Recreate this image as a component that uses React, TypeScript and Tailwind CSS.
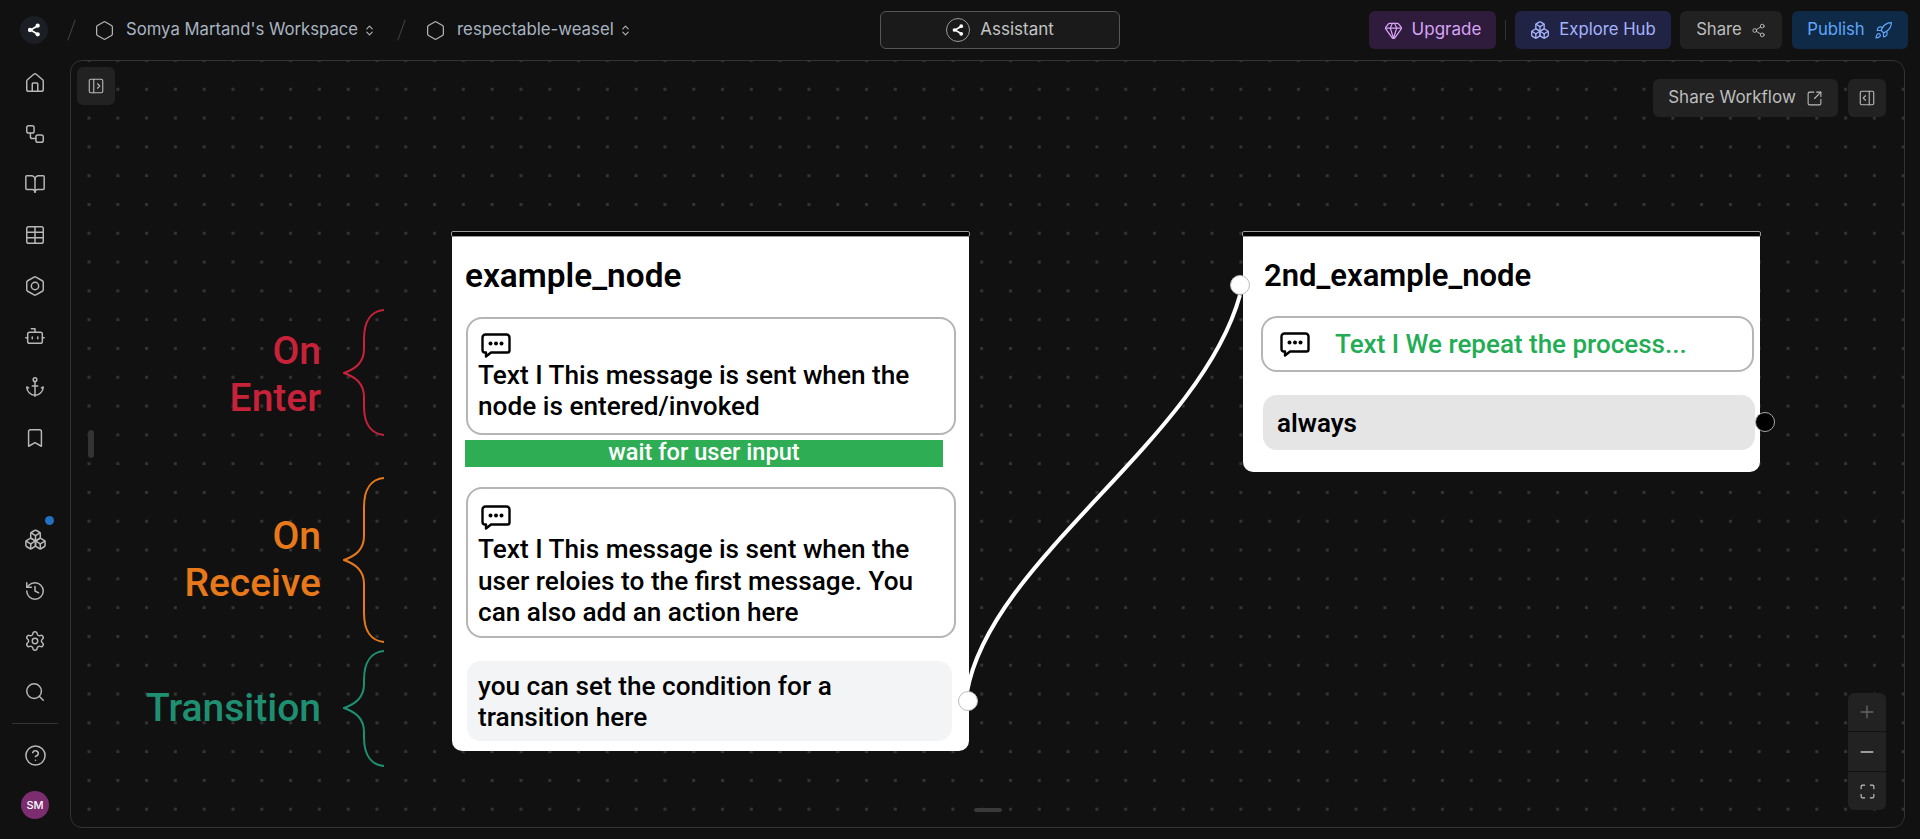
import React from 'react';
import {
  Anchor,
  Bookmark,
  BookOpen,
  Bot,
  Boxes,
  ChevronsUpDown,
  CircleHelp,
  Gem,
  Hexagon,
  History,
  House,
  Maximize,
  Minus,
  PanelLeftOpen,
  PanelRightOpen,
  Plus,
  Rocket,
  Search,
  Settings,
  Share2,
  SquareArrowOutUpRight,
  Table,
  Workflow,
} from 'lucide-react';

function ShareLogo({ size = 16 }: { size?: number }) {
  return (
    <svg width={size} height={size} viewBox="0 0 24 24" fill="currentColor" stroke="currentColor" strokeWidth="2.5">
      <line x1="7" y1="12" x2="17" y2="6" />
      <line x1="7" y1="12" x2="17" y2="18" />
      <circle cx="6" cy="12" r="3.2" stroke="none" />
      <circle cx="17.5" cy="5.5" r="3.2" stroke="none" />
      <circle cx="17.5" cy="18.5" r="3.2" stroke="none" />
    </svg>
  );
}

function HexRing({ size = 22 }: { size?: number }) {
  return (
    <svg width={size} height={size} viewBox="0 0 24 24" fill="none" stroke="currentColor" strokeWidth="1.6" strokeLinejoin="round">
      <path d="M21 16V8a2 2 0 0 0-1-1.73l-7-4a2 2 0 0 0-2 0l-7 4A2 2 0 0 0 3 8v8a2 2 0 0 0 1 1.73l7 4a2 2 0 0 0 2 0l7-4A2 2 0 0 0 21 16z" />
      <circle cx="12" cy="12" r="4" />
    </svg>
  );
}

function ChatIcon() {
  return (
    <svg width="30" height="25" viewBox="0 0 30 25" fill="none" className="block shrink-0">
      <path
        d="M4.5 1.5h21a3 3 0 0 1 3 3v13a2 2 0 0 1-2 2H10l-5 4v-4H4a2.5 2.5 0 0 1-2.5-2.5v-12.500a3 3 0 0 1 3-3z"
        stroke="#000"
        strokeWidth="2.4"
        strokeLinejoin="round"
      />
      <circle cx="9.500" cy="10.500" r="2" fill="#000" />
      <circle cx="15" cy="10.500" r="2" fill="#000" />
      <circle cx="20.500" cy="10.500" r="2" fill="#000" />
    </svg>
  );
}

function Brace({ h, tip, color }: { h: number; tip: number; color: string }) {
  const d = `M41 1 C29 2 21 11 21 30 L21 ${tip - 24} C21 ${tip - 10} 12 ${tip - 4} 1 ${tip} C12 ${tip + 4} 21 ${tip + 10} 21 ${tip + 24} L21 ${h - 30} C21 ${h - 11} 29 ${h - 2} 41 ${h - 1}`;
  return (
    <svg width="41" height={h} viewBox={`0 0 41 ${h}`} fill="none" className="shrink-0">
      <path d={d} stroke={color} strokeWidth="2" />
    </svg>
  );
}

const sideTop = [House, Workflow, BookOpen, Table, HexRing, Bot, Anchor, Bookmark];

export default function App() {
  return (
    <div className="flex h-screen w-screen flex-col overflow-hidden bg-[#111111] font-['Inter',sans-serif]">
      {/* Top bar */}
      <header className="flex h-[60px] shrink-0 items-center pl-[20px] pr-[12px]">
        <div className="flex w-[860px] items-center">
          <div className="flex h-[28px] w-[28px] items-center justify-center rounded-full bg-[#1b1e25] text-white">
            <ShareLogo />
          </div>
          <div className="ml-[23px] h-[22px] w-px rotate-[20deg] bg-[#444444]" />
          <Hexagon size={21} strokeWidth={1.4} className="ml-[22px] text-[#b5b5b5]" />
          <span className="ml-[11px] text-[16.700px] text-[#a9b4c2]">Somya Martand's Workspace</span>
          <ChevronsUpDown size={13} className="ml-[5px] text-[#b5b5b5]" />
          <div className="ml-[25px] h-[22px] w-px rotate-[20deg] bg-[#444444]" />
          <Hexagon size={21} strokeWidth={1.4} className="ml-[23px] text-[#b5b5b5]" />
          <span className="ml-[11px] text-[16.800px] text-[#a9b4c2]">respectable-weasel</span>
          <ChevronsUpDown size={13} className="ml-[5px] text-[#b5b5b5]" />
        </div>
        <button className="flex h-[38px] w-[240px] items-center justify-center gap-[10px] rounded-md border border-[#555555] bg-[#1a1a1a] text-[17px] text-[#c4c4c4]">
          <span className="flex h-[24px] w-[24px] items-center justify-center rounded-full border border-[#999999] text-white">
            <ShareLogo size={14} />
          </span>
          Assistant
        </button>
        <div className="ml-auto flex items-center">
          <button className="flex h-[38px] w-[127px] items-center justify-center gap-[9px] rounded-md bg-[#2f1c3c] text-[17px] text-[#d8a4f7]">
            <Gem size={19} strokeWidth={1.6} />
            Upgrade
          </button>
          <div className="mx-[9px] h-[20px] w-px bg-[#333333]" />
          <button className="flex h-[38px] w-[156px] items-center justify-center gap-[9px] rounded-md bg-[#212345] text-[16.700px] text-[#a5b4fc]">
            <Boxes size={20} strokeWidth={1.6} />
            Explore Hub
          </button>
          <button className="ml-[9px] flex h-[38px] w-[102px] items-center justify-center gap-[9px] rounded-md bg-[#212121] text-[16.700px] text-[#bdbdbd]">
            Share
            <Share2 size={15} strokeWidth={1.5} />
          </button>
          <button className="ml-[10px] flex h-[38px] w-[116px] items-center justify-center gap-[9px] rounded-md bg-[#0f2a47] text-[16.700px] text-[#60a5fa]">
            Publish
            <Rocket size={19} strokeWidth={1.5} />
          </button>
        </div>
      </header>

      <div className="flex min-h-0 flex-1">
        {/* Sidebar */}
        <aside className="flex w-[70px] shrink-0 flex-col justify-between pb-[14px] pt-[3px] text-[#b8b8b8]">
          <div className="flex flex-col items-center gap-[10.7px]">
            {sideTop.map((Icon, i) => (
              <div key={i} className="flex h-[40px] w-[40px] items-center justify-center">
                <Icon size={22} strokeWidth={1.6} />
              </div>
            ))}
          </div>
          <div className="flex flex-col items-center">
            <div className="relative flex h-[40px] w-[40px] items-center justify-center">
              <Boxes size={23} strokeWidth={1.6} />
              <span className="absolute right-[1px] top-[-4px] h-[9px] w-[9px] rounded-full bg-[#2170c4]" />
            </div>
            <div className="mt-[10.7px] flex h-[40px] w-[40px] items-center justify-center">
              <History size={22} strokeWidth={1.6} />
            </div>
            <div className="mt-[10.7px] flex h-[40px] w-[40px] items-center justify-center">
              <Settings size={22} strokeWidth={1.6} />
            </div>
            <div className="mt-[10.7px] flex h-[40px] w-[40px] items-center justify-center">
              <Search size={22} strokeWidth={1.6} />
            </div>
            <div className="mt-[11px] h-px w-[46px] bg-[#333333]" />
            <div className="mt-[11px] flex h-[40px] w-[40px] items-center justify-center">
              <CircleHelp size={23} strokeWidth={1.6} />
            </div>
            <div className="mt-[10px] flex h-[40px] w-[40px] items-center justify-center">
              <span className="flex h-[28px] w-[28px] items-center justify-center rounded-full bg-[#7b2d70] text-[11px] font-medium text-white">
                SM
              </span>
            </div>
          </div>
        </aside>

        {/* Canvas */}
        <main className="relative mb-[11px] mr-[15px] min-w-0 flex-1 overflow-hidden rounded-xl border border-[#333333] bg-[#111111] bg-[radial-gradient(circle,#333333_1.8px,transparent_2px)] bg-[length:28.8px_28.8px] bg-[position:3.6px_13.9px] font-['Roboto',sans-serif]">
          <button className="absolute left-[6px] top-[6px] flex h-[38px] w-[38px] items-center justify-center rounded-md bg-[#222222] text-[#b8b8b8]">
            <PanelLeftOpen size={18} strokeWidth={1.5} />
          </button>
          <div className="absolute right-[18px] top-[18px] flex items-center gap-[10px] font-['Inter',sans-serif]">
            <button className="flex h-[38px] w-[185px] items-center justify-center gap-[10px] rounded-md bg-[#222222] text-[17px] text-[#bdbdbd]">
              Share Workflow
              <SquareArrowOutUpRight size={17} strokeWidth={1.5} />
            </button>
            <button className="flex h-[38px] w-[38px] items-center justify-center rounded-md bg-[#222222] text-[#b8b8b8]">
              <PanelRightOpen size={18} strokeWidth={1.5} />
            </button>
          </div>
          <div className="absolute left-[17px] top-[369px] h-[28px] w-[6px] rounded-full bg-[#333333]" />
          <div className="absolute bottom-[15px] left-[903px] h-[4px] w-[28px] rounded-full bg-[#3a3a3a]" />

          {/* Annotations */}
          <div className="absolute left-0 top-[248px] flex h-[127px] w-[313px] items-center justify-end gap-[22px]">
            <div className="pt-[4px] text-right text-[39px] font-medium leading-[47px] text-[#c8223a]">
              On
              <br />
              Enter
            </div>
            <Brace h={127} tip={64} color="#c8223a" />
          </div>
          <div className="absolute left-0 top-[416px] flex h-[166px] w-[313px] items-center justify-end gap-[22px]">
            <div className="text-right text-[39px] font-medium leading-[47px] text-[#e8791a]">
              On
              <br />
              Receive
            </div>
            <Brace h={166} tip={83} color="#e8791a" />
          </div>
          <div className="absolute left-0 top-[589px] flex h-[117px] w-[313px] items-center justify-end gap-[22px]">
            <div className="text-right text-[39px] font-medium leading-[47px] text-[#1f8f72]">Transition</div>
            <Brace h={117} tip={58} color="#1f8f72" />
          </div>

          {/* First node */}
          <div className="absolute left-[380px] top-[170px] w-[519px]">
            <div className="h-[6px] rounded-[2px] border border-[#999999] bg-black" />
            <div className="mx-px flex h-[514px] flex-col rounded-b-[10px] bg-white pt-[20px] text-[26.200px] font-medium text-black">
              <div className="ml-[13px] text-[33.400px] font-semibold leading-[38px]">example_node</div>
              <div className="ml-[14px] mt-[22px] h-[118px] w-[490px] rounded-[16px] border-2 border-[#b5b5b5] pl-[10px] pt-[14px]">
                <div className="ml-[3px]">
                  <ChatIcon />
                </div>
                <div className="mt-[2px] leading-[31px]">
                  Text I This message is sent when the
                  <br />
                  node is entered/invoked
                </div>
              </div>
              <div className="ml-[13px] mt-[5px] flex h-[27px] w-[478px] items-center justify-center bg-[#2ead55] pb-[2px] text-[23.600px] text-white">
                wait for user input
              </div>
              <div className="ml-[14px] mt-[20px] h-[151px] w-[490px] rounded-[16px] border-2 border-[#b5b5b5] pl-[10px] pt-[16px]">
                <div className="ml-[3px]">
                  <ChatIcon />
                </div>
                <div className="mt-[4px] leading-[31.500px]">
                  Text I This message is sent when the
                  <br />
                  user reloies to the first message. You
                  <br />
                  can also add an action here
                </div>
              </div>
              <div className="ml-[15px] mt-[23px] flex h-[80px] w-[485px] items-center rounded-[14px] bg-[#f3f4f6] pl-[11px] pt-[2px] leading-[31px]">
                <div>
                  you can set the condition for a
                  <br />
                  transition here
                </div>
              </div>
            </div>
          </div>

          {/* Second node */}
          <div className="absolute left-[1171px] top-[170px] w-[519px]">
            <div className="h-[6px] rounded-[2px] border border-[#999999] bg-black" />
            <div className="mx-px flex h-[235px] flex-col rounded-b-[10px] bg-white pt-[20px] text-[26px] font-medium text-black">
              <div className="ml-[21px] text-[31px] font-semibold leading-[38px]">2nd_example_node</div>
              <div className="ml-[18px] mt-[21px] flex h-[56px] w-[493px] items-center rounded-[16px] border-2 border-[#b5b5b5] pl-[17px]">
                <ChatIcon />
                <span className="ml-[25px] text-[#22ad55]">Text I We repeat the process...</span>
              </div>
              <div className="ml-[20px] mt-[23px] flex h-[55px] w-[492px] items-center rounded-[14px] bg-[#e5e5e5] pl-[14px] pt-[2px] font-semibold">
                always
              </div>
            </div>
          </div>

          {/* Edge and handles */}
          <svg className="pointer-events-none absolute left-0 top-0 h-full w-full" fill="none">
            <path d="M896 631 C919 499 1129 379 1169 234" stroke="#ffffff" strokeWidth="4" />
          </svg>
          <div className="absolute left-[887px] top-[630px] h-[20px] w-[20px] rounded-full border border-[#bbbbbb] bg-white" />
          <div className="absolute left-[1159px] top-[214px] h-[20px] w-[20px] rounded-full border border-[#bbbbbb] bg-white" />
          <div className="absolute left-[1684px] top-[351px] h-[20px] w-[20px] rounded-full border border-[#aaaaaa] bg-black" />

          {/* Zoom controls */}
          <div className="absolute bottom-[17px] right-[18px] flex w-[38px] flex-col overflow-hidden rounded-md bg-[#222222]">
            <div className="flex h-[39px] items-center justify-center border-b border-[#111111] text-[#666666]">
              <Plus size={20} strokeWidth={1.6} />
            </div>
            <div className="flex h-[40px] items-center justify-center border-b border-[#111111] text-[#c4c4c4]">
              <Minus size={20} strokeWidth={1.6} />
            </div>
            <div className="flex h-[38px] items-center justify-center text-[#c4c4c4]">
              <Maximize size={17} strokeWidth={1.6} />
            </div>
          </div>
        </main>
      </div>
    </div>
  );
}
